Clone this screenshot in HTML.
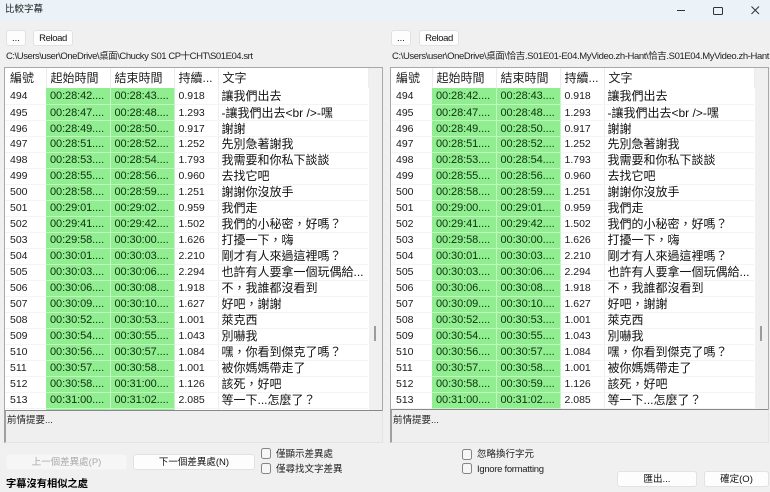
<!DOCTYPE html>
<html><head><meta charset="utf-8"><style>
html,body{margin:0;padding:0}
body{width:770px;height:492px;overflow:hidden;position:relative;background:#f0f0f0;font-family:"Liberation Sans","Noto Sans CJK TC",sans-serif;color:#111;filter:blur(.3px)}
.a{position:absolute;white-space:nowrap}
.tb{left:0;top:0;width:770px;height:22px;background:#ebf3f8}
.btn{position:absolute;box-sizing:border-box;background:#fdfdfd;border:1px solid #e2e2e2;border-radius:3px;text-align:center;font-size:9.5px;line-height:15px;color:#111;white-space:nowrap}
.r{letter-spacing:-.4px}
.path{position:absolute;top:51px;font-size:9.5px;line-height:12px;white-space:nowrap;color:#222;overflow:hidden;letter-spacing:-.45px}
.panel{position:absolute;top:67px;width:379px;height:344px;box-sizing:border-box;border:1px solid #a8a8a8;background:#f0f0f0;overflow:hidden}
table{position:absolute;left:0;top:0;border-collapse:collapse;table-layout:fixed;width:363px;background:#fff}
td,th{padding:0;overflow:hidden;white-space:nowrap;font-weight:normal;text-align:left;box-sizing:border-box}
th{height:20px;font-size:12px;padding:0 0 1px 4px;border-right:1px solid #ececec;background:#fff;color:#222}
th:first-child{padding-left:5px}
td{height:16px;font-size:10.5px;line-height:15px;padding-left:5px;border-bottom:1px solid #f4f4f4;color:#1a1a1a;vertical-align:middle}
tr:nth-child(-n+4) td{padding-top:1px;line-height:14px}
td:nth-child(4){padding-left:4px}
td.g{background:#90ee90;border-right:1px solid #c4f5c4;border-bottom:1px solid #c4f5c4;color:#0f2f0f;padding-left:4px;font-size:11px;letter-spacing:-.08px}
td.t{font-size:12px;color:#111;padding-left:3px;border-left:1px solid #eee}
.box{position:absolute;top:410px;width:379px;height:33px;box-sizing:border-box;border-left:2px solid #a0a0a0;border-top:1px solid #888;border-right:1px solid #e4e4e4;border-bottom:1px solid #e4e4e4;font-size:9.5px;line-height:12px;padding:3px 0 0 1px;color:#222;background:#efefef}
.sb{position:absolute;top:326px;width:2px;height:15px;background:#9c9c9c}
.cb{position:absolute;width:10px;height:11px;box-sizing:border-box;border:1px solid #858585;border-radius:2.5px;background:#f6f6f6}
.lb{position:absolute;font-size:9.5px;line-height:12px;white-space:nowrap;color:#222}
</style></head><body>
<div class="a tb"></div>
<div class="a" style="left:5px;top:4px;font-size:9.5px;line-height:12px;color:#222">比較字幕</div>
<svg class="a" style="left:670px;top:0" width="100" height="22" fill="none" stroke="#333" stroke-width="1"><path d="M7 10.5H15"/><path d="M44.5 7.5h7a1 1 0 0 1 1 1v5a1 1 0 0 1-1 1h-7a1 1 0 0 1-1-1v-5a1 1 0 0 1 1-1z"/><path d="M81.5 6.5l7.5 7.5M89 6.5l-7.5 7.5"/></svg>

<div class="btn" style="left:6px;top:30px;width:20px;height:16px">...</div>
<div class="btn r" style="left:33px;top:30px;width:40px;height:16px">Reload</div>
<div class="path" style="left:6px">C:\Users\user\OneDrive\桌面\Chucky S01 CP十CHT\S01E04.srt</div>
<div class="btn" style="left:391px;top:30px;width:20px;height:16px">...</div>
<div class="btn r" style="left:419px;top:30px;width:40px;height:16px">Reload</div>
<div class="path" style="left:392px;width:378px;letter-spacing:-.4px">C:\Users\user\OneDrive\桌面\恰吉.S01E01-E04.MyVideo.zh-Hant\恰吉.S01E04.MyVideo.zh-Hant</div>

<div class="panel" style="left:4px">
<table><colgroup><col style="width:41px"><col style="width:64px"><col style="width:64px"><col style="width:44px"><col style="width:150px"></colgroup>
<tr><th>編號</th><th>起始時間</th><th>結束時間</th><th>持續...</th><th>文字</th></tr>
<tr><td>494</td><td class="g">00:28:42....</td><td class="g">00:28:43....</td><td>0.918</td><td class="t">讓我們出去</td></tr>
<tr><td>495</td><td class="g">00:28:47....</td><td class="g">00:28:48....</td><td>1.293</td><td class="t">-讓我們出去&lt;br /&gt;-嘿</td></tr>
<tr><td>496</td><td class="g">00:28:49....</td><td class="g">00:28:50....</td><td>0.917</td><td class="t">謝謝</td></tr>
<tr><td>497</td><td class="g">00:28:51....</td><td class="g">00:28:52....</td><td>1.252</td><td class="t">先別急著謝我</td></tr>
<tr><td>498</td><td class="g">00:28:53....</td><td class="g">00:28:54....</td><td>1.793</td><td class="t">我需要和你私下談談</td></tr>
<tr><td>499</td><td class="g">00:28:55....</td><td class="g">00:28:56....</td><td>0.960</td><td class="t">去找它吧</td></tr>
<tr><td>500</td><td class="g">00:28:58....</td><td class="g">00:28:59....</td><td>1.251</td><td class="t">謝謝你沒放手</td></tr>
<tr><td>501</td><td class="g">00:29:01....</td><td class="g">00:29:02....</td><td>0.959</td><td class="t">我們走</td></tr>
<tr><td>502</td><td class="g">00:29:41....</td><td class="g">00:29:42....</td><td>1.502</td><td class="t">我們的小秘密&#xFF0C;好嗎&#xFF1F;</td></tr>
<tr><td>503</td><td class="g">00:29:58....</td><td class="g">00:30:00....</td><td>1.626</td><td class="t">打擾一下&#xFF0C;嗨</td></tr>
<tr><td>504</td><td class="g">00:30:01....</td><td class="g">00:30:03....</td><td>2.210</td><td class="t">剛才有人來過這裡嗎&#xFF1F;</td></tr>
<tr><td>505</td><td class="g">00:30:03....</td><td class="g">00:30:06....</td><td>2.294</td><td class="t">也許有人要拿一個玩偶給...</td></tr>
<tr><td>506</td><td class="g">00:30:06....</td><td class="g">00:30:08....</td><td>1.918</td><td class="t">不&#xFF0C;我誰都沒看到</td></tr>
<tr><td>507</td><td class="g">00:30:09....</td><td class="g">00:30:10....</td><td>1.627</td><td class="t">好吧&#xFF0C;謝謝</td></tr>
<tr><td>508</td><td class="g">00:30:52....</td><td class="g">00:30:53....</td><td>1.001</td><td class="t">萊克西</td></tr>
<tr><td>509</td><td class="g">00:30:54....</td><td class="g">00:30:55....</td><td>1.043</td><td class="t">別嚇我</td></tr>
<tr><td>510</td><td class="g">00:30:56....</td><td class="g">00:30:57....</td><td>1.084</td><td class="t">嘿&#xFF0C;你看到傑克了嗎&#xFF1F;</td></tr>
<tr><td>511</td><td class="g">00:30:57....</td><td class="g">00:30:58....</td><td>1.001</td><td class="t">被你媽媽帶走了</td></tr>
<tr><td>512</td><td class="g">00:30:58....</td><td class="g">00:31:00....</td><td>1.126</td><td class="t">該死&#xFF0C;好吧</td></tr>
<tr><td>513</td><td class="g">00:31:00....</td><td class="g">00:31:02....</td><td>2.085</td><td class="t">等一下...怎麼了&#xFF1F;</td></tr>
<tr><td></td><td class="g"></td><td class="g"></td><td></td><td class="t"></td></tr>
</table></div>
<div class="sb" style="left:374px"></div>
<div class="box" style="left:4px;padding-top:4px">前情提要...</div>

<div class="panel" style="left:390px;height:343px">
<table><colgroup><col style="width:41px"><col style="width:64px"><col style="width:64px"><col style="width:44px"><col style="width:150px"></colgroup>
<tr><th>編號</th><th>起始時間</th><th>結束時間</th><th>持續...</th><th>文字</th></tr>
<tr><td>494</td><td class="g">00:28:42....</td><td class="g">00:28:43....</td><td>0.918</td><td class="t">讓我們出去</td></tr>
<tr><td>495</td><td class="g">00:28:47....</td><td class="g">00:28:48....</td><td>1.293</td><td class="t">-讓我們出去&lt;br /&gt;-嘿</td></tr>
<tr><td>496</td><td class="g">00:28:49....</td><td class="g">00:28:50....</td><td>0.917</td><td class="t">謝謝</td></tr>
<tr><td>497</td><td class="g">00:28:51....</td><td class="g">00:28:52....</td><td>1.252</td><td class="t">先別急著謝我</td></tr>
<tr><td>498</td><td class="g">00:28:53....</td><td class="g">00:28:54....</td><td>1.793</td><td class="t">我需要和你私下談談</td></tr>
<tr><td>499</td><td class="g">00:28:55....</td><td class="g">00:28:56....</td><td>0.960</td><td class="t">去找它吧</td></tr>
<tr><td>500</td><td class="g">00:28:58....</td><td class="g">00:28:59....</td><td>1.251</td><td class="t">謝謝你沒放手</td></tr>
<tr><td>501</td><td class="g">00:29:00....</td><td class="g">00:29:01....</td><td>0.959</td><td class="t">我們走</td></tr>
<tr><td>502</td><td class="g">00:29:41....</td><td class="g">00:29:42....</td><td>1.502</td><td class="t">我們的小秘密&#xFF0C;好嗎&#xFF1F;</td></tr>
<tr><td>503</td><td class="g">00:29:58....</td><td class="g">00:30:00....</td><td>1.626</td><td class="t">打擾一下&#xFF0C;嗨</td></tr>
<tr><td>504</td><td class="g">00:30:01....</td><td class="g">00:30:03....</td><td>2.210</td><td class="t">剛才有人來過這裡嗎&#xFF1F;</td></tr>
<tr><td>505</td><td class="g">00:30:03....</td><td class="g">00:30:06....</td><td>2.294</td><td class="t">也許有人要拿一個玩偶給...</td></tr>
<tr><td>506</td><td class="g">00:30:06....</td><td class="g">00:30:08....</td><td>1.918</td><td class="t">不&#xFF0C;我誰都沒看到</td></tr>
<tr><td>507</td><td class="g">00:30:09....</td><td class="g">00:30:10....</td><td>1.627</td><td class="t">好吧&#xFF0C;謝謝</td></tr>
<tr><td>508</td><td class="g">00:30:52....</td><td class="g">00:30:53....</td><td>1.001</td><td class="t">萊克西</td></tr>
<tr><td>509</td><td class="g">00:30:54....</td><td class="g">00:30:55....</td><td>1.043</td><td class="t">別嚇我</td></tr>
<tr><td>510</td><td class="g">00:30:56....</td><td class="g">00:30:57....</td><td>1.084</td><td class="t">嘿&#xFF0C;你看到傑克了嗎&#xFF1F;</td></tr>
<tr><td>511</td><td class="g">00:30:57....</td><td class="g">00:30:58....</td><td>1.001</td><td class="t">被你媽媽帶走了</td></tr>
<tr><td>512</td><td class="g">00:30:58....</td><td class="g">00:30:59....</td><td>1.126</td><td class="t">該死&#xFF0C;好吧</td></tr>
<tr><td>513</td><td class="g">00:31:00....</td><td class="g">00:31:02....</td><td>2.085</td><td class="t">等一下...怎麼了&#xFF1F;</td></tr>
<tr><td></td><td class="g"></td><td class="g"></td><td></td><td class="t"></td></tr>
</table></div>
<div class="sb" style="left:760px"></div>
<div class="box" style="left:390px;top:409px;height:34px;padding-top:5px">前情提要...</div>

<div class="btn" style="left:6px;top:454px;width:121px;height:16px;background:#f6f6f6;border-color:#f2f2f2;color:#aaa">上一個差異處(P)</div>
<div class="btn" style="left:133px;top:454px;width:122px;height:16px">下一個差異處(N)</div>
<div class="cb" style="left:261px;top:448px"></div><div class="lb" style="left:276px;top:449px">僅顯示差異處</div>
<div class="cb" style="left:261px;top:463px"></div><div class="lb" style="left:276px;top:464px">僅尋找文字差異</div>
<div class="a" style="left:6px;top:478px;font-size:10.25px;line-height:13px;font-weight:bold;color:#000">字幕沒有相似之處</div>
<div class="cb" style="left:462px;top:449px"></div><div class="lb" style="left:477px;top:449px">忽略換行字元</div>
<div class="cb" style="left:462px;top:463px"></div><div class="lb" style="left:477px;top:464px;letter-spacing:-.3px">Ignore formatting</div>
<div class="btn" style="left:617px;top:471px;width:80px;height:16px">匯出...</div>
<div class="btn" style="left:704px;top:471px;width:65px;height:16px">確定(O)</div>
</body></html>
